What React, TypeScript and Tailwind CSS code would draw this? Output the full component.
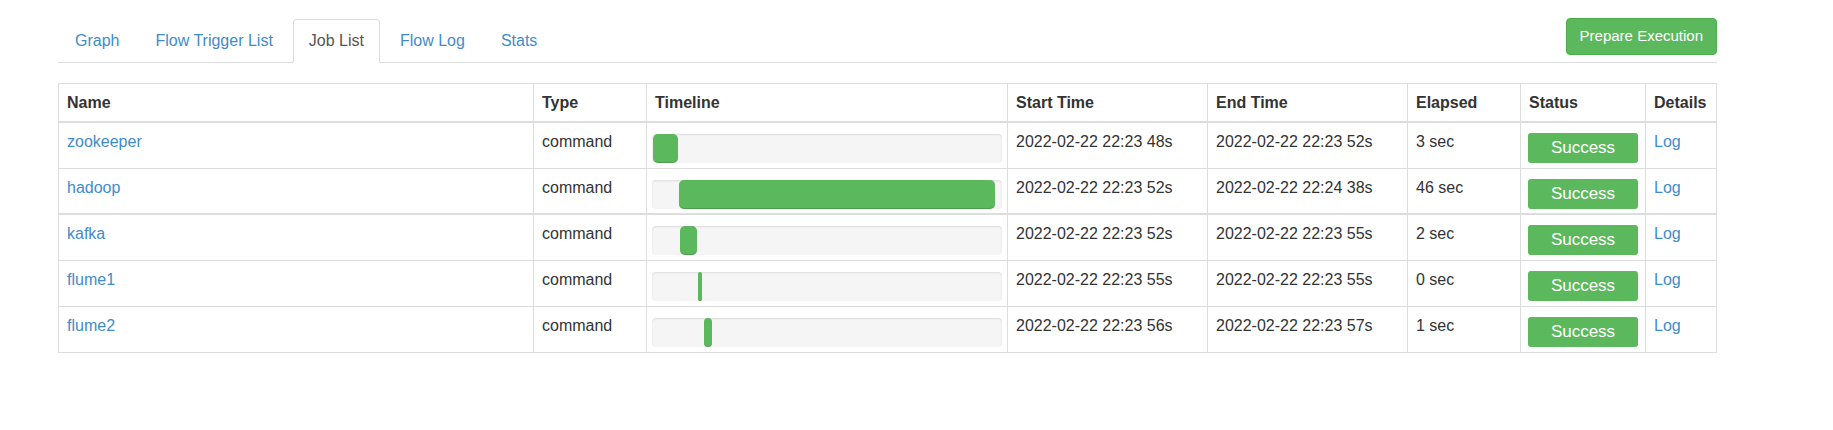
type Job = {
  name: string;
  start: string;
  end: string;
  elapsed: string;
  offset: number;
  width: number;
};

const jobs: Job[] = [
  { name: "zookeeper", start: "2022-02-22 22:23 48s", end: "2022-02-22 22:23 52s", elapsed: "3 sec", offset: 1, width: 25 },
  { name: "hadoop", start: "2022-02-22 22:23 52s", end: "2022-02-22 22:24 38s", elapsed: "46 sec", offset: 27, width: 316 },
  { name: "kafka", start: "2022-02-22 22:23 52s", end: "2022-02-22 22:23 55s", elapsed: "2 sec", offset: 28, width: 17 },
  { name: "flume1", start: "2022-02-22 22:23 55s", end: "2022-02-22 22:23 55s", elapsed: "0 sec", offset: 46, width: 4 },
  { name: "flume2", start: "2022-02-22 22:23 56s", end: "2022-02-22 22:23 57s", elapsed: "1 sec", offset: 52, width: 8 },
];

const tabs = ["Graph", "Flow Trigger List", "Job List", "Flow Log", "Stats"];

const th = "border border-[#ddd] border-b-2 px-2 py-2 text-left font-bold leading-[21px]";
const td = "h-[46px] border border-[#ddd] px-2 pt-2 align-top leading-[22px]";

export default function App() {
  return (
    <div className="min-h-screen bg-white font-['Liberation_Sans',Arial,sans-serif] text-[16px] text-[#333]">
      <div className="ml-[58px] w-[1659px] pt-[19px]">
        <div className="flex items-start justify-between border-b border-[#ddd]">
          <ul className="-mb-px flex gap-[4px] pl-px">
            {tabs.map((t) => (
              <li key={t}>
                <a
                  className={
                    t === "Job List"
                      ? "block rounded-t-[4px] border border-[#ddd] border-b-transparent bg-white px-[15px] py-[10px] leading-[22px] text-[#555]"
                      : "block rounded-t-[4px] border border-transparent px-[15px] py-[10px] leading-[22px] text-[#428bca]"
                  }
                >
                  {t}
                </a>
              </li>
            ))}
          </ul>
          <button className="-mt-px h-[37px] rounded-[4px] border border-[#4cae4c] bg-[#5cb85c] px-[13px] text-[15px] text-white">
            Prepare Execution
          </button>
        </div>

        <table className="mt-[20px] w-full table-fixed border-collapse border border-[#ddd]">
          <thead>
            <tr>
              <th className={`${th} w-[475px]`}>Name</th>
              <th className={`${th} w-[113px]`}>Type</th>
              <th className={`${th} w-[361px]`}>Timeline</th>
              <th className={`${th} w-[200px]`}>Start Time</th>
              <th className={`${th} w-[200px]`}>End Time</th>
              <th className={`${th} w-[113px]`}>Elapsed</th>
              <th className={`${th} w-[125px]`}>Status</th>
              <th className={th}>Details</th>
            </tr>
          </thead>
          <tbody>
            {jobs.map((j, i) => (
              <tr key={j.name} className={i === 2 ? "border-t-2 border-[#ddd]" : ""}>
                <td className={`${td} text-[#428bca]`}>{j.name}</td>
                <td className={td}>command</td>
                <td className="h-[46px] border border-[#ddd] px-[5px] pt-[11px] align-top">
                  <div className="flex h-[29px] rounded-[4px] bg-[#f5f5f5] shadow-[inset_0_1px_2px_rgba(0,0,0,0.1)]">
                    <div
                      className="h-full rounded-[5px] bg-[#5cb85c] shadow-[inset_0_-1px_0_rgba(0,0,0,0.15)]"
                      style={{ marginLeft: j.offset, width: j.width }}
                    />
                  </div>
                </td>
                <td className={td}>{j.start}</td>
                <td className={td}>{j.end}</td>
                <td className={td}>{j.elapsed}</td>
                <td className="h-[46px] border border-[#ddd] px-[7px] pt-[10px] align-top">
                  <div className="flex h-[30px] w-full items-center justify-center rounded-[3px] bg-[#5cb85c] text-[17px] text-white">
                    Success
                  </div>
                </td>
                <td className={`${td} text-[#428bca]`}>Log</td>
              </tr>
            ))}
          </tbody>
        </table>
      </div>
    </div>
  );
}
